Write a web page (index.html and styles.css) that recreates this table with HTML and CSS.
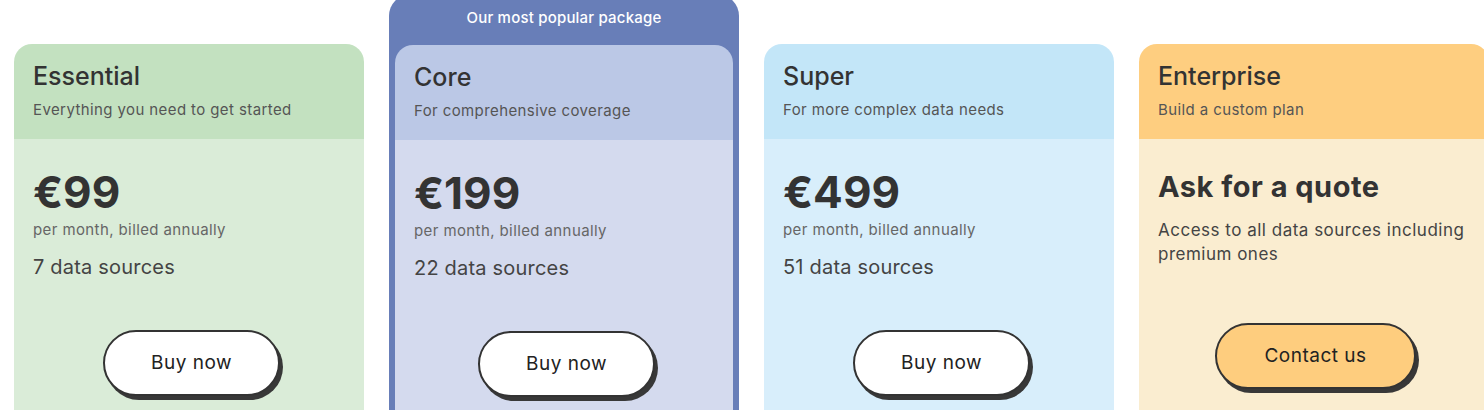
FILE: index.html
```html
<!DOCTYPE html>
<html lang="en">
<head>
    <meta charset="UTF-8">
    <meta name="viewport" content="width=device-width, initial-scale=1.0">
    <title>Pricing</title>
    <link rel="stylesheet" href="styles.css">
</head>
<body>

    <!-- pricing plans -->
    <div class="plans">

        <div class="card card-green">
            <div class="card-head">
                <h2 class="plan-name">Essential</h2>
                <p class="plan-tagline">Everything you need to get started</p>
            </div>
            <div class="card-body">
                <p class="price">€99</p>
                <p class="billing">per month, billed annually</p>
                <p class="sources">7 data sources</p>
                <div class="action"><button class="btn">Buy now</button></div>
            </div>
        </div>

        <!-- highlighted plan -->
        <div class="featured">
            <p class="featured-label">Our most popular package</p>
            <div class="card card-blue">
                <div class="card-head">
                    <h2 class="plan-name">Core</h2>
                    <p class="plan-tagline">For comprehensive coverage</p>
                </div>
                <div class="card-body">
                    <p class="price">€199</p>
                    <p class="billing">per month, billed annually</p>
                    <p class="sources">22 data sources</p>
                    <div class="action"><button class="btn">Buy now</button></div>
                </div>
            </div>
        </div>

        <div class="card card-sky">
            <div class="card-head">
                <h2 class="plan-name">Super</h2>
                <p class="plan-tagline">For more complex data needs</p>
            </div>
            <div class="card-body">
                <p class="price">€499</p>
                <p class="billing">per month, billed annually</p>
                <p class="sources">51 data sources</p>
                <div class="action"><button class="btn">Buy now</button></div>
            </div>
        </div>

        <div class="card card-orange">
            <div class="card-head">
                <h2 class="plan-name">Enterprise</h2>
                <p class="plan-tagline">Build a custom plan</p>
            </div>
            <div class="card-body">
                <p class="quote">Ask for a quote</p>
                <p class="quote-text">Access to all data sources including<br>premium ones</p>
                <div class="action"><button class="btn btn-orange">Contact us</button></div>
            </div>
        </div>

    </div>

</body>
</html>
```

FILE: styles.css
```css
/* base */
body {
    margin: 0;
    background-color: #fff;
    font-family: Inter, "Noto Sans", sans-serif;
    color: #353535;
    height: 410px;
    overflow: hidden;
}

p, h2 {
    margin: 0;
}

/* row of plans */
.plans {
    display: flex;
    align-items: flex-start;
    gap: 25px;
    padding: 44px 0 0 14px;
}

.card {
    flex-shrink: 0;
    width: 350px;
    border-radius: 18px 18px 0 0;
    overflow: hidden;
}

.card-head {
    box-sizing: border-box;
    height: 95px;
    padding: 16px 19px 0;
}

.plan-name {
    font-size: 25px;
    font-weight: 500;
    line-height: 32px;
    color: #333;
}

.plan-tagline {
    margin-top: 7px;
    font-size: 15px;
    line-height: 22px;
    letter-spacing: 0.4px;
    color: #555;
}

.card-body {
    padding: 27px 19px 0;
    height: 260px;
}

.price {
    font-size: 44px;
    font-weight: 700;
    line-height: 52px;
    color: #333;
}

.billing {
    margin-top: 2px;
    font-size: 15px;
    line-height: 20px;
    letter-spacing: 0.4px;
    color: #666;
}

.sources {
    margin-top: 14px;
    font-size: 20px;
    line-height: 26px;
    letter-spacing: 0.2px;
    color: #444;
}

.action {
    display: flex;
    justify-content: center;
    margin-top: 50px;
    padding-left: 5px;
}

/* pill buttons with offset shadow */
.btn {
    padding: 20px 46px;
    font-family: inherit;
    font-size: 19px;
    line-height: 22px;
    letter-spacing: 0.5px;
    color: #222;
    background-color: #fff;
    border: 2px solid #333;
    border-radius: 40px;
    box-shadow: 3px 4px 0 #383838;
    cursor: pointer;
}

.btn-orange {
    background-color: #fecd7e;
    padding: 20px 47px;
}

/* colours per plan */
.card-green .card-head { background-color: #c3e1c0; }
.card-green .card-body { background-color: #daecd8; }

.card-blue { width: 338px; }
.card-blue .card-head { background-color: #bbc8e6; }
.card-blue .card-body { background-color: #d4daee; }

.card-sky .card-head { background-color: #c3e6f8; }
.card-sky .card-body { background-color: #d8eefb; }

.card-orange .card-head { background-color: #fece80; }
.card-orange .card-body { background-color: #faedd0; padding-top: 30px; padding-right: 4px; }

/* popular package frame */
.featured {
    flex-shrink: 0;
    box-sizing: border-box;
    width: 350px;
    margin-top: -50px;
    padding: 0 6px;
    background-color: #687eb8;
    border-radius: 22px 22px 0 0;
}

.featured-label {
    box-sizing: border-box;
    height: 51px;
    padding-top: 14px;
    font-size: 15px;
    font-weight: 500;
    line-height: 20px;
    letter-spacing: 0.2px;
    text-align: center;
    color: #fff;
}

.featured .card {
    border-radius: 18px 18px 0 0;
}

/* enterprise */
.quote {
    font-size: 29px;
    font-weight: 700;
    line-height: 36px;
    letter-spacing: 0.5px;
    color: #333;
}

.quote-text {
    margin-top: 13px;
    font-size: 17px;
    line-height: 24px;
    letter-spacing: 0.5px;
    color: #444;
}

.card-orange .action {
    margin-top: 57px;
    padding-left: 0;
    padding-right: 12px;
}
```
